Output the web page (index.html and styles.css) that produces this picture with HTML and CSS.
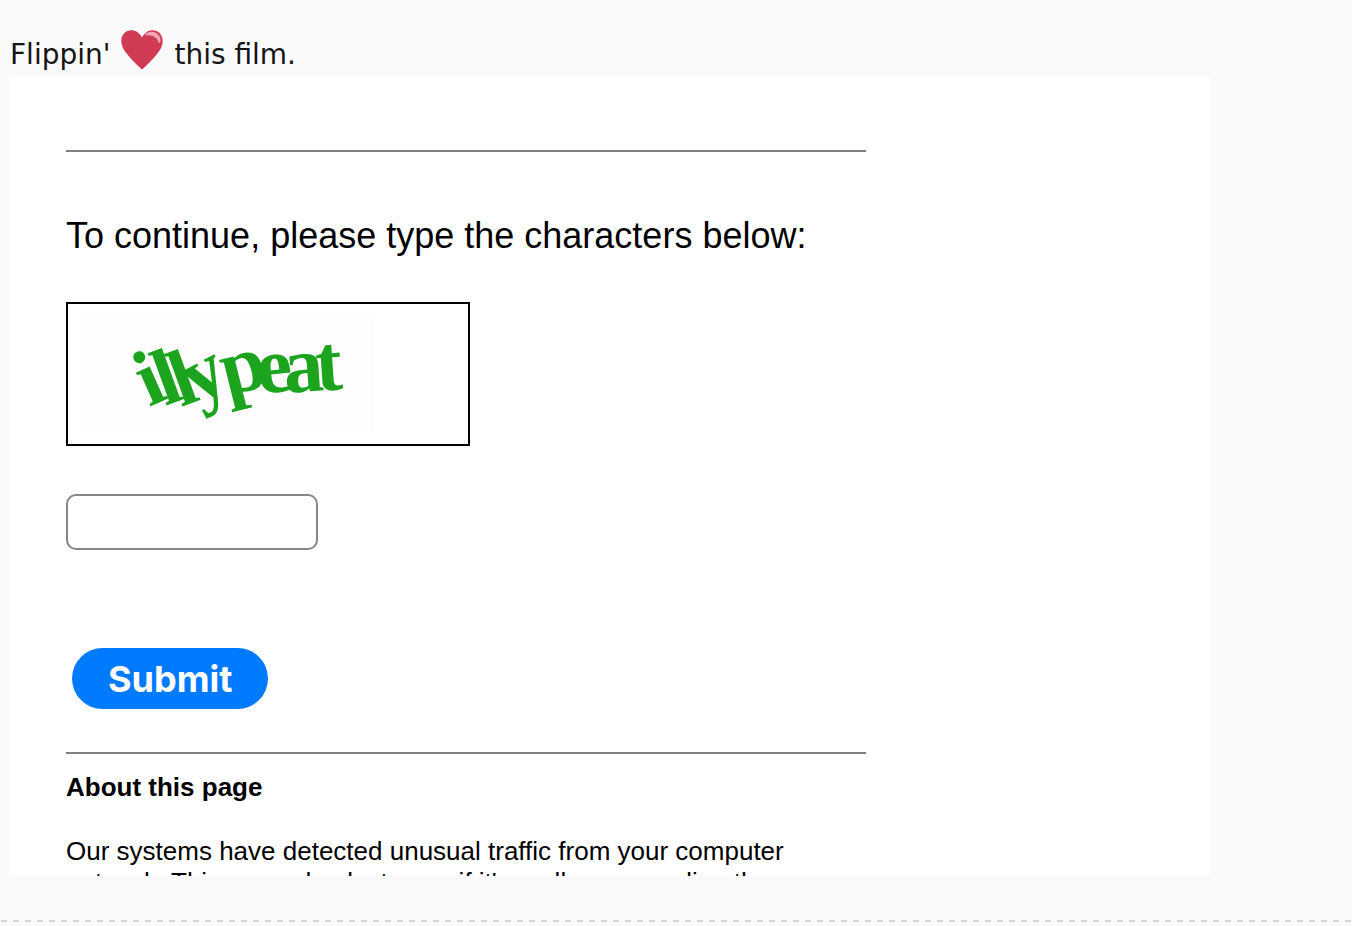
FILE: index.html
```
<!DOCTYPE html>
<html lang="en">
<head>
	<meta charset="utf-8">
	<title>Flippin' love this film</title>
	<link rel="stylesheet" href="styles.css">
</head>
<body>
	<article class="post">
		<p class="post-text">
			<span>Flippin'</span>
			<svg class="heart" viewBox="0 0 42 40" role="img" aria-label="love">
				<path fill="#d13a53" d="M21 7.500C18.500 3 15 .3 10.500 .3 4.500 .3 .3 5 .3 11c0 5 2.500 9 5.700 13C10 29 16 35 21 39.500 26 35 32 29 36 24c3.200-4 5.700-8 5.700-13C41.700 5 37.500 .3 31.500 .3 27 .3 23.500 3 21 7.500z"/>
				<path fill="#f2a3b4" d="M25 3.500C29 1 33.500 1.500 36.500 4 39.500 6.500 40 10 39.300 12c-.5 1.200-1.600 1.200-2 0C36.500 8 32 5 26 5.300c-1.500 0-2-1-1-1.800z"/>
			</svg>
			<span>this film.</span>
		</p>
		<section class="embed">
			<hr>
			<form action="#">
				<label class="prompt" for="captcha">To continue, please type the characters below:</label>
				<div class="captcha-image">
					<svg viewBox="0 0 400 140">
						<rect class="noise" x="16" y="14" width="290" height="114"/>
						<text class="captcha-text" x="81 97 113 129 159 191 217 249" y="103 102 103 101 92 90 89 87" rotate="-24 -20 -20 -28 -14 -6 -4 -4">illypeat</text>
					</svg>
				</div>
				<input type="text" id="captcha" class="answer">
				<button type="submit" class="submit">Submit</button>
			</form>
			<hr>
			<div class="about">
				<h2>About this page</h2>
				<p>Our systems have detected unusual traffic from your computer network. This page checks to see if it's really you sending the</p>
			</div>
		</section>
	</article>
</body>
</html>
```
FILE: styles.css
```
body {
	margin: 0;
	background: #fafafa;
	color: #151515;
	font: 28px/36px "DejaVu Sans", Verdana, sans-serif;
}

/* dashed rule between posts */
.post {
	padding: 28px 10px 46px;
	background: repeating-linear-gradient(to right, #fafafa 0 1px, #d5d5d5 1px 7px, #fafafa 7px 12px) left bottom / 100% 2px no-repeat;
}

.post-text {
	display: flex;
	gap: 11px;
	height: 48px;
	margin: 0;
	line-height: 54px;
}

.heart {
	width: 42px;
	height: 40px;
	margin-top: 2px;
}

.embed {
	box-sizing: border-box;
	max-width: 1200px;
	height: 800px;
	padding: 74px 56px 0;
	overflow: hidden;
	background: #fff;
	color: #000;
	font: 26px/30px Arial, "Liberation Sans", sans-serif;
}

.embed hr {
	max-width: 800px;
	height: 2px;
	margin: 0;
	border: 0;
	background: #808080;
}

.embed form {
	display: flex;
	flex-direction: column;
	align-items: flex-start;
	padding: 64px 0 43px;
}

.prompt {
	font-size: 36px;
	line-height: 40px;
}

.captcha-image {
	width: 400px;
	height: 140px;
	margin: 46px 0 48px;
	border: 2px solid #000;
}

.captcha-image svg {
	display: block;
}

.noise {
	fill: #fdfdfd;
}

.captcha-text {
	fill: #1ca41f;
	font: bold 80px "Liberation Serif", serif;
}

.answer {
	box-sizing: border-box;
	width: 252px;
	height: 56px;
	padding: 4px 12px;
	border: 2px solid #87868b;
	border-radius: 10px;
	background: #fff;
	font: inherit;
}

.submit {
	margin: 98px 6px 0;
	padding: 9px 36px 7px;
	border: 0;
	border-radius: 31px;
	background: #007aff;
	color: #fff;
	font: 700 36px/45px Inter, sans-serif;
}

.about {
	max-width: 800px;
	padding-top: 18px;
}

.about h2 {
	margin: 0 0 34px;
	font-size: 26px;
	line-height: 30px;
}

.about p {
	margin: 0;
	line-height: 31px;
}
```
